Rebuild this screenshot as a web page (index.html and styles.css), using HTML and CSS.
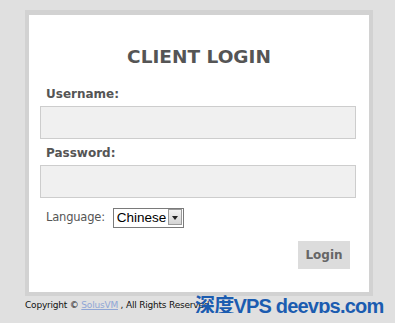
FILE: index.html
```html
<!DOCTYPE html>
<html lang="en">
<head>
    <meta charset="UTF-8">
    <title>Client Login</title>
    <link rel="stylesheet" href="styles.css">
</head>
<body>
    <div class="login-box">
        <h1>CLIENT LOGIN</h1>
        <form id="loginForm">
            <label class="field-label">Username:</label>
            <input type="text" class="text-input">
            <label class="field-label">Password:</label>
            <input type="password" class="text-input">
            <div class="lang-row">
                <span class="lang-label">Language:</span>
                <div class="select-wrap">
                    <select class="lang-select">
                        <option>Chinese</option>
                    </select>
                    <span class="select-arrow"></span>
                </div>
            </div>
            <div class="btn-row">
                <button type="submit" class="login-btn">Login</button>
            </div>
        </form>
    </div>
    <div class="footer">
        Copyright &copy; <a href="#">SolusVM</a> , All Rights Reserved
        <span class="watermark">深度VPS deevps.com</span>
    </div>
</body>
</html>
```

FILE: styles.css
```css
body {
    margin: 0;
    padding: 10px 0 0 25px;
    background: #e0e0e0;
    font-family: 'DejaVu Sans', Tahoma, sans-serif;
}
.login-box {
    width: 340px;
    height: 277px;
    background: white;
    border: 4px solid #d2d2d2;
    border-top-width: 5px;
}
h1 {
    margin: 31px 0 20px;
    text-align: center;
    font-size: 18.5px;
    color: #555;
}
form {
    padding: 0 11px;
}
.field-label {
    display: block;
    margin: 0 0 5px 6px;
    font-size: 12px;
    font-weight: bold;
    color: #555;
}
.text-input {
    display: block;
    box-sizing: border-box;
    width: 316px;
    height: 33px;
    margin: 0 0 7px;
    background: #f0f0f0;
    border: 1px solid #cdcdcd;
}
.lang-row {
    display: flex;
    align-items: center;
    margin: 9px 0 0 6px;
}
.lang-label {
    font-size: 11.5px;
    letter-spacing: -0.2px;
    color: #555;
    margin-right: 8px;
}
.select-wrap {
    position: relative;
    width: 71px;
    height: 20px;
}
.lang-select {
    appearance: none;
    box-sizing: border-box;
    width: 71px;
    height: 20px;
    font-family: 'Liberation Sans', Arial, sans-serif;
    font-size: 13.5px;
    color: #000;
    border: 1px solid #7a7a7a;
    background: white;
    padding: 0 0 0 3px;
}
.select-arrow {
    position: absolute;
    right: 2px;
    top: 2px;
    width: 14px;
    height: 16px;
    background: linear-gradient(#f2f2f2, #d4d4d4);
    border: 1px solid #9a9a9a;
    box-sizing: border-box;
}
.select-arrow::after {
    content: "";
    position: absolute;
    left: 3px;
    top: 6px;
    border-left: 3px solid transparent;
    border-right: 3px solid transparent;
    border-top: 4px solid #222;
}
.btn-row {
    display: flex;
    justify-content: flex-end;
    margin-top: 14px;
    padding-right: 8px;
}
.login-btn {
    width: 52px;
    height: 28px;
    background: #dcdcdc;
    border: none;
    font-family: 'DejaVu Sans', Tahoma, sans-serif;
    font-size: 12px;
    font-weight: bold;
    color: #666;
}
.footer {
    position: relative;
    margin-top: 1px;
    font-size: 9px;
    letter-spacing: -0.2px;
    color: #111;
    line-height: 16px;
    white-space: nowrap;
}
.footer a {
    color: #8fa6d6;
}
.watermark {
    position: absolute;
    left: 170px;
    top: -3px;
    font-family: 'Liberation Sans', 'Noto Sans CJK SC', sans-serif;
    font-size: 20px;
    line-height: 24px;
    font-weight: bold;
    color: #1b5cb0;
    letter-spacing: -0.8px;
}
```
